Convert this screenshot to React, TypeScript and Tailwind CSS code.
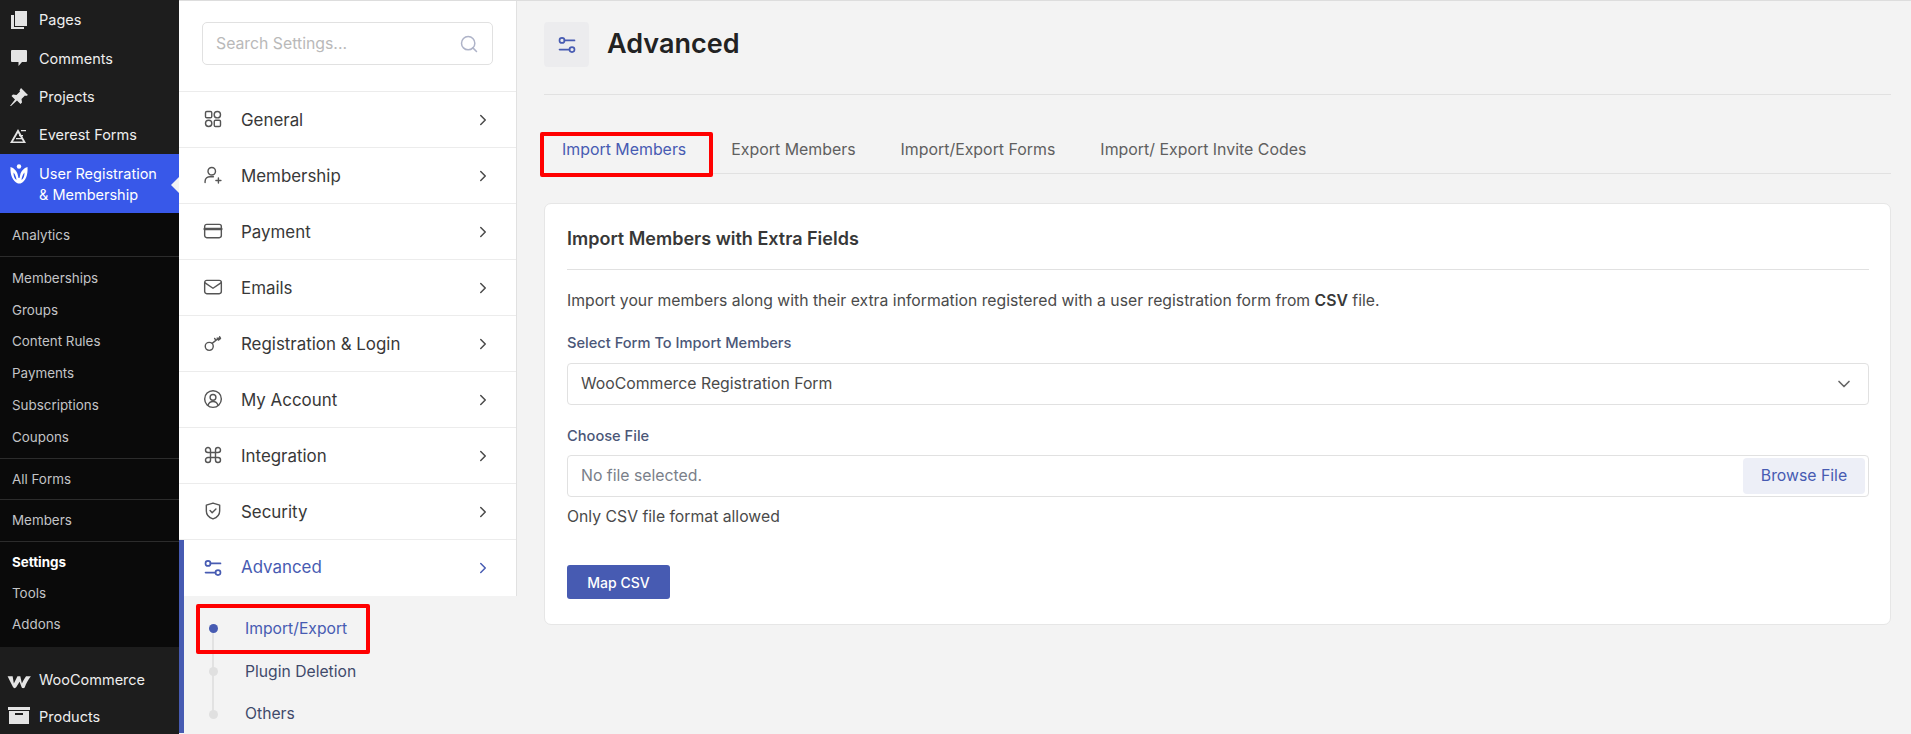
import { ChevronDown, ChevronRight, Search } from "lucide-react";
import type { ReactNode } from "react";

const SlidersIcon = ({ className }: { className?: string }) => (
  <svg viewBox="0 0 24 24" fill="none" stroke="currentColor" strokeWidth="2" strokeLinecap="round" className={className}>
    <circle cx="6" cy="6.5" r="3" />
    <path d="M9 6.5h12" />
    <circle cx="18" cy="17.5" r="3" />
    <path d="M15 17.5H3" />
  </svg>
);

const rowIcons: Record<string, ReactNode> = {
  General: (
    <>
      <rect x="3" y="3" width="7.5" height="7.5" rx="1.5" />
      <circle cx="17.2" cy="6.8" r="3.8" />
      <circle cx="6.8" cy="17.2" r="3.8" />
      <rect x="13.5" y="13.5" width="7.5" height="7.5" rx="1.5" />
    </>
  ),
  Membership: (
    <>
      <circle cx="10.5" cy="7.5" r="4.5" />
      <path d="M2.5 21v-1.5c0-3.5 3-5.5 6-5.5h4" />
      <path d="M18.5 15.5v6M15.5 18.5h6" />
    </>
  ),
  Payment: (
    <>
      <rect x="2" y="4" width="20" height="16" rx="2.5" />
      <path d="M2 9.5h20" strokeWidth="3" />
    </>
  ),
  Emails: (
    <>
      <rect x="2" y="4" width="20" height="16" rx="2.5" />
      <path d="m2.5 7 9.5 6.5L21.5 7" />
    </>
  ),
  "Registration & Login": (
    <>
      <circle cx="7.5" cy="16" r="4.8" />
      <path d="m11 12.500 8-6.500M15.500 9l-1.500-2.500M20 4.500l1 2-2.500 2-1.500-2.500" />
    </>
  ),
  "My Account": (
    <>
      <circle cx="12" cy="12" r="10" />
      <circle cx="12" cy="10" r="3.5" />
      <path d="M6 19.5c1-3 3.5-4.5 6-4.5s5 1.500 6 4.500" />
    </>
  ),
  Integration: (
    <path d="M9 9h6v6H9zM9 9V6a3 3 0 1 0-3 3h3zM15 9h3a3 3 0 1 0-3-3v3zM15 15v3a3 3 0 1 0 3-3h-3zM9 15H6a3 3 0 1 0 3 3v-3z" />
  ),
  Security: (
    <>
      <path d="M12 2.500 20 5v7c0 5-3.500 8-8 9.500C7.500 20 4 17 4 12V5l8-2.500z" />
      <path d="m8.500 11.500 2.500 2.500 4.500-4.500" />
    </>
  ),
};

const rows = ["General", "Membership", "Payment", "Emails", "Registration & Login", "My Account", "Integration", "Security"];

const TopItem = ({ label, icon }: { label: string; icon: ReactNode }) => (
  <div className="flex h-[38.25px] shrink-0 items-center gap-[10px] pl-[9px] text-[14.500px] text-[#eeeeee]">
    <svg viewBox="0 0 20 20" fill="currentColor" className="h-[20px] w-[20px] shrink-0 overflow-visible text-[#e4e4e4]">
      {icon}
    </svg>
    <span>{label}</span>
  </div>
);

const SubItem = ({ label, active }: { label: string; active?: boolean }) => (
  <div className={`flex h-[31.8px] shrink-0 items-center pl-[12px] text-[13.400px] ${active ? "font-bold text-white" : "text-[#c3c4c7]"}`}>
    {label}
  </div>
);

const Sidebar = () => (
  <aside className="flex h-[734px] w-[179px] shrink-0 flex-col overflow-hidden bg-[#1d1d1d] pt-[1px] font-['Inter',sans-serif]">
    <TopItem label="Pages" icon={<path d="M6 1h12v15H6zM2 5h3v12h10v2H2z" />} />
    <TopItem label="Comments" icon={<path d="M3 2h14a1 1 0 0 1 1 1v10a1 1 0 0 1-1 1h-4l-3.500 4V14H3a1 1 0 0 1-1-1V3a1 1 0 0 1 1-1z" />} />
    <TopItem label="Projects" icon={<path d="m12 1 7 7-2 1-1-.500-3.500 3.500.500 3.500-1.500 1.500-3.500-3.500L2 19l-1 0 5-6.500L2.500 9 4 7.500l3.500.500L11 4.500 10.500 3.500z" />} />
    <TopItem
      label="Everest Forms"
      icon={
        <>
          <path d="M1 18 9 4l8 14H1zm3-1.500h10L9 8z" fillRule="evenodd" />
          <path d="M10 10h4v1.300h-4zM12 5h5v1.300h-5zM7 13h6v1.300H7z" />
        </>
      }
    />
    <div className="relative flex h-[59px] shrink-0 items-center gap-[10px] bg-[#3858e9] pl-[9px] text-[14.500px] leading-[21px] text-white">
      <svg viewBox="0 0 20 20" fill="currentColor" className="mb-[20px] h-[20px] w-[20px] shrink-0">
        <circle cx="10" cy="2.500" r="2.200" />
        <path d="M1.500 3C5 4 8 7 8.800 11l.7 3h1l.7-3c.8-4 3.800-7 7.300-8 .5 8-1.500 14-7 16.500H9C3.500 17 1 11 1.500 3z" />
        <path d="M4.500 8.500c0 3.500.8 6 3 7.500-.3-3-1.300-5.500-3-7.500zm11 0c-1.700 2-2.700 4.500-3 7.500 2.200-1.500 3-4 3-7.500z" fill="#3858e9" />
      </svg>
      <span className="whitespace-nowrap">
        User Registration
        <br />& Membership
      </span>
      <span className="absolute right-0 top-[23px] h-0 w-0 border-y-[8px] border-r-[8px] border-y-transparent border-r-[#f3f3f3]" />
    </div>
    <div className="flex h-[434px] shrink-0 flex-col bg-[#0a0a0a]">
      <div className="flex h-[44px] shrink-0 items-center border-b border-[#2c2c2c] pl-[12px] pt-[2px] text-[13.400px] text-[#c3c4c7]">Analytics</div>
      <div className="flex flex-col border-b border-[#2c2c2c] py-[5px]">
        {["Memberships", "Groups", "Content Rules", "Payments", "Subscriptions", "Coupons"].map((s) => (
          <SubItem key={s} label={s} />
        ))}
      </div>
      <div className="flex h-[41px] shrink-0 items-center border-b border-[#2c2c2c] pl-[12px] text-[13.400px] text-[#c3c4c7]">All Forms</div>
      <div className="flex h-[42px] shrink-0 items-center border-b border-[#2c2c2c] pl-[12px] text-[13.400px] text-[#c3c4c7]">Members</div>
      <div className="flex flex-col pt-[5px] [&>div]:h-[31px]">
        <SubItem label="Settings" active />
        <SubItem label="Tools" />
        <SubItem label="Addons" />
      </div>
    </div>
    <div className="shrink-0 pt-[14px]">
      <TopItem
        label="WooCommerce"
        icon={<path transform="translate(-2 -1.500) scale(1.200)" d="M.5 6.500h4.200l1 6 3-6h2.400l1.300 6c1.200-2.500 2.300-4.500 3.500-6h4c-2 2.500-4 6-5 9-.500 1.300-2.300 1.300-2.800 0L10.500 11l-2.700 4.500c-.700 1.200-2.300 1.200-2.800 0C3.500 12.500 2 9.500.5 6.500z" />}
      />
      <div className="-mt-[2px]">
        <TopItem label="Products" icon={<path d="M-1 1h22v3H-1zM0 5h20v13H0zm6 2v2h8V7z" fillRule="evenodd" />} />
      </div>
    </div>
  </aside>
);

const MenuRow = ({ label }: { label: string }) => (
  <div className="flex h-[56px] items-center justify-between border-b border-[#ececec] pl-[24px] pr-[24px]">
    <div className="flex items-center gap-[18px]">
      <svg viewBox="0 0 24 24" fill="none" stroke="currentColor" strokeWidth="1.700" strokeLinecap="round" strokeLinejoin="round" className="h-[20px] w-[20px] text-[#555555]">
        {rowIcons[label]}
      </svg>
      <span className="pt-[2px] text-[16.900px] text-[#383838]">{label}</span>
    </div>
    <ChevronRight className="h-[18px] w-[18px] text-[#4a4a4a]" strokeWidth={2} />
  </div>
);

const SettingsMenu = () => (
  <div className="flex w-[338px] shrink-0 flex-col">
    <div className="border-r border-[#e1e1e1] bg-white">
      <div className="h-[92px] border-b border-[#ececec] px-[23px] pt-[22px]">
        <div className="flex h-[43px] w-full items-center justify-between rounded-[5px] border border-[#e1e1e1] pl-[13px] pr-[13px]">
          <span className="text-[15.800px] text-[#b9b9b9]">Search Settings...</span>
          <Search className="h-[20px] w-[20px] text-[#aeb3c8]" strokeWidth={1.800} />
        </div>
      </div>
      {rows.map((r) => (
        <MenuRow key={r} label={r} />
      ))}
      <div className="flex h-[56px] items-center justify-between border-l-[5px] border-[#475bb2] pl-[19px] pr-[24px] text-[#475bb2]">
        <div className="flex items-center gap-[18px]">
          <SlidersIcon className="h-[20px] w-[20px]" />
          <span className="text-[16.900px]">Advanced</span>
        </div>
        <ChevronRight className="h-[18px] w-[18px]" strokeWidth={2} />
      </div>
    </div>
    <div className="relative h-[137px] border-l-[5px] border-[#475bb2] pl-[61px] pt-[21px]">
      <span className="absolute left-[28px] top-[33px] h-[86px] w-[2px] bg-[#e2e2e2]" />
      <span className="absolute left-[24.500px] top-[28px] h-[9px] w-[9px] rounded-full bg-[#475bb2]" />
      <span className="absolute left-[24.500px] top-[71px] h-[9px] w-[9px] rounded-full bg-[#e0e0e0]" />
      <span className="absolute left-[24.500px] top-[114px] h-[9px] w-[9px] rounded-full bg-[#e0e0e0]" />
      <div className="flex h-[43px] items-start text-[15.700px] text-[#475bb2]">Import/Export</div>
      <div className="flex h-[42px] items-start text-[15.700px] text-[#3f4a6b]">Plugin Deletion</div>
      <div className="flex items-start text-[15.700px] text-[#3f4a6b]">Others</div>
    </div>
  </div>
);

const tabs = ["Export Members", "Import/Export Forms", "Import/ Export Invite Codes"];

const Content = () => (
  <main className="min-w-0 flex-1 pl-[27px] pr-[20px]">
    <div className="flex h-[95px] items-start gap-[18px] border-b border-[#e1e1e1] pt-[22px]">
      <div className="flex h-[45px] w-[45px] items-center justify-center rounded-[4px] bg-[#ececee]">
        <SlidersIcon className="h-[20px] w-[20px] text-[#475bb2]" />
      </div>
      <h1 className="text-[27px] font-semibold leading-[43px] text-[#222222]">Advanced</h1>
    </div>
    <div className="mt-[36px] flex h-[43px] items-start gap-[45px] border-b border-[#e1e1e1] pl-[18px] pt-[8px] text-[15.900px] font-normal leading-[22px] text-[#5f5f5f]">
      <span className="text-[#475bb2]">Import Members</span>
      {tabs.map((t) => (
        <span key={t}>{t}</span>
      ))}
    </div>
    <section className="mt-[29px] h-[422px] rounded-[7px] border border-[#e6e6e6] bg-white pl-[22px] pr-[21px]">
      <h2 className="flex h-[66px] items-center border-b border-[#e1e1e1] pt-[4px] text-[18px] font-semibold text-[#383838]">Import Members with Extra Fields</h2>
      <p className="mt-[20px] text-[15.750px] leading-[22px] text-[#4a4a4a]">
        Import your members along with their extra information registered with a user registration form from <b className="font-semibold text-[#383838]">CSV</b> file.
      </p>
      <label className="mt-[21px] block text-[14.650px] font-medium leading-[21px] text-[#4b5778]">Select Form To Import Members</label>
      <div className="mt-[9px] flex h-[42px] items-center justify-between rounded-[4px] border border-[#e1e1e1] pl-[13px] pr-[14px] text-[15.800px] text-[#4a4a4a]">
        WooCommerce Registration Form
        <ChevronDown className="h-[20px] w-[20px] text-[#666666]" strokeWidth={2} />
      </div>
      <label className="mt-[21px] block text-[14.650px] font-medium leading-[21px] text-[#4b5778]">Choose File</label>
      <div className="mt-[8px] flex h-[42px] items-center justify-between rounded-[4px] border border-[#e1e1e1] pl-[13px] pr-[3px] text-[15.800px] text-[#7a7f8a]">
        No file selected.
        <span className="flex h-[36px] w-[122px] items-center justify-center rounded-[4px] bg-[#edeff7] text-[#475bb2]">Browse File</span>
      </div>
      <p className="mt-[9px] text-[15.750px] leading-[22px] text-[#4a4a4a]">Only CSV file format allowed</p>
      <button className="mt-[37px] flex h-[34px] w-[103px] items-center justify-center rounded-[3px] bg-[#475bb2] text-[14px] font-medium text-white">Map CSV</button>
    </section>
  </main>
);

export default function App() {
  return (
    <div className="relative flex h-[734px] w-[1911px] overflow-hidden bg-[#f3f3f3] font-['Inter',sans-serif]">
      <Sidebar />
      <SettingsMenu />
      <Content />
      <span className="absolute left-[179px] right-0 top-0 h-[1px] bg-[#dddddd]" />
      {/* red callouts drawn over the screenshot */}
      <span className="absolute left-[540px] top-[132px] h-[45px] w-[173px] rounded-[2px] border-[4px] border-[#ff0000]" />
      <span className="absolute left-[196px] top-[604px] h-[50px] w-[174px] rounded-[2px] border-[4px] border-[#ff0000]" />
    </div>
  );
}
